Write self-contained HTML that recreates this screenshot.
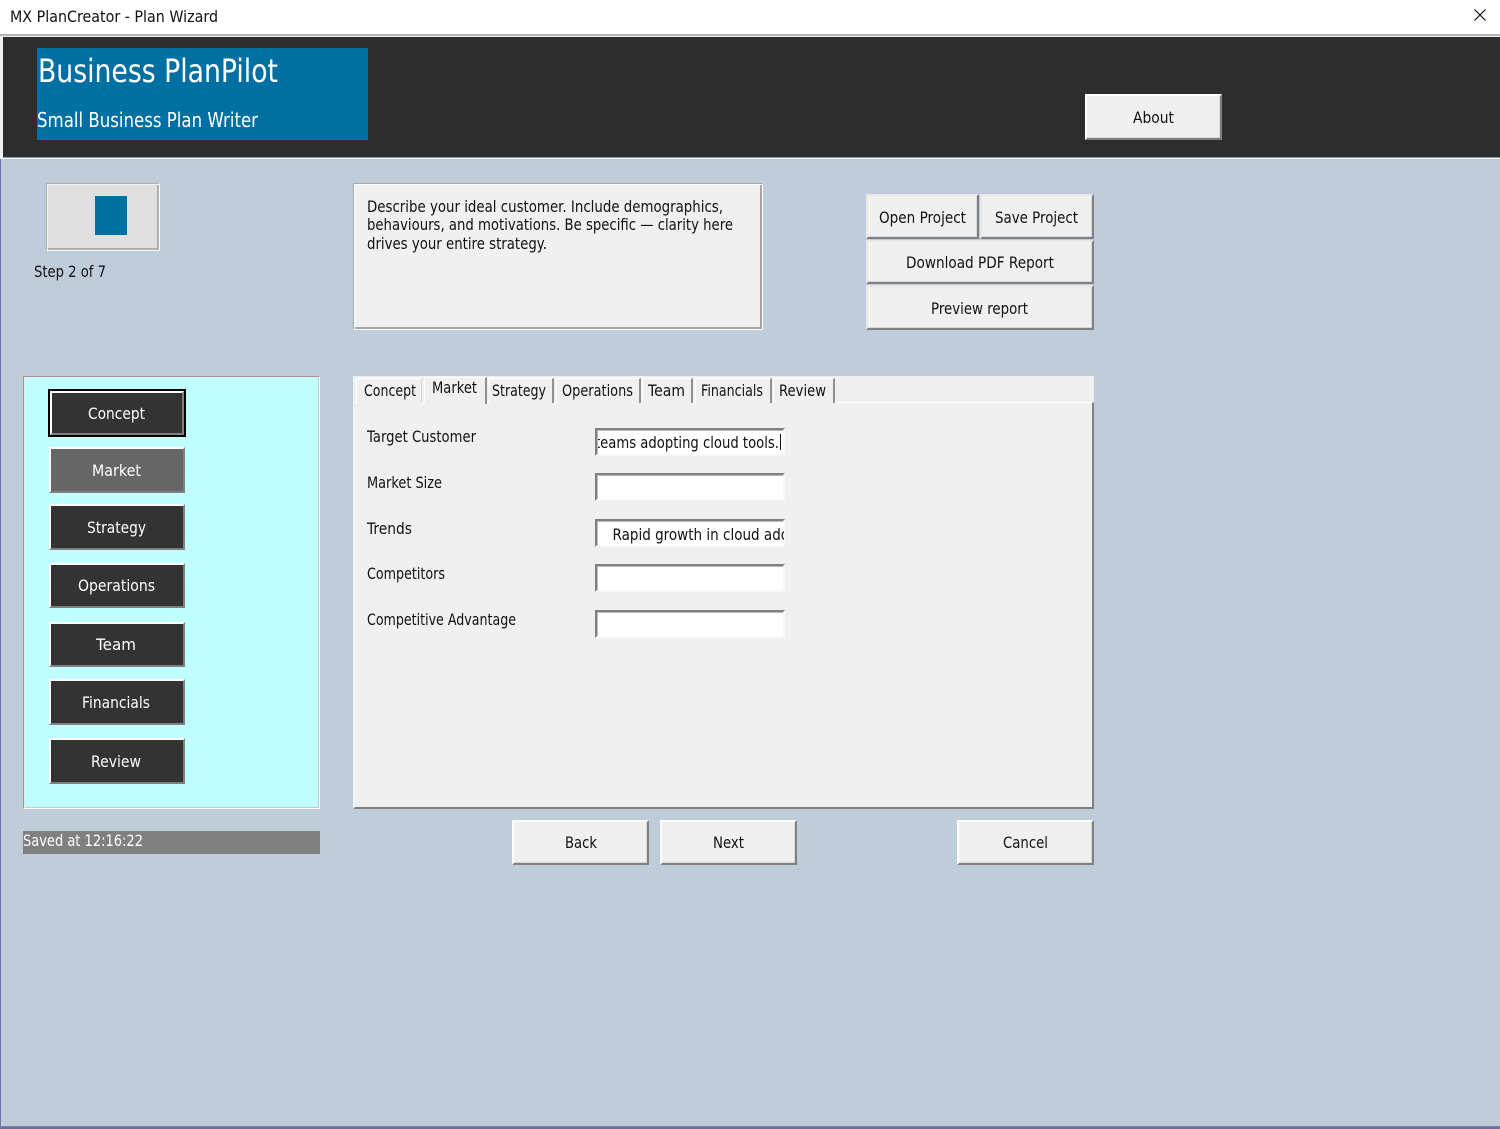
<!DOCTYPE html>
<html><head><meta charset="utf-8"><title>MX PlanCreator - Plan Wizard</title>
<style>
html,body{margin:0;padding:0;width:1500px;height:1129px;overflow:hidden;background:#bfcddb}
div{position:absolute;box-sizing:border-box}
.btn{background:#f0f0f0;border-style:solid;border-width:2px;border-color:#fff #808080 #808080 #fff;box-shadow:inset -1px -1px 0 #d8d8d8}
.btn2{background:#f0f0f0;border-style:solid;border-width:2px;border-color:#e8e8e8 #808080 #808080 #e8e8e8;box-shadow:inset -1px -1px 0 #d8d8d8}
.nav{background:#333;border-style:solid;border-width:2px;border-color:#fff #808080 #808080 #fff;left:49px;width:136px}
.inp{background:#fff;left:595px;width:190px;height:28px;border-style:solid;border-width:2px;border-color:#808080 #f8f8f8 #f8f8f8 #808080;box-shadow:inset 1px 1px 0 #bbb}
.tab{background:#f0f0f0;top:378px;height:25px;border-right:2px solid #909090;border-left:1px solid #fff;border-top:1px solid #fff}
svg{position:absolute;left:0;top:0}
text{font-family:"DejaVu Sans","Liberation Sans",sans-serif;font-size:16px;fill:#111}
.w{fill:#fff}
</style></head><body>
<div style="left:0;top:0;width:1px;height:1129px;background:#7272a8"></div>
<div style="left:0;top:0;width:1500px;height:34px;background:#fff"></div>
<div style="left:0;top:34px;width:1500px;height:2px;background:#b4b4b4"></div>
<div style="left:0;top:36px;width:1500px;height:123px;background:#f0f0f0"></div>
<div style="left:3px;top:37px;width:1497px;height:120px;background:#2d2d2d"></div>
<div style="left:3px;top:157px;width:1497px;height:1px;background:#999"></div>
<div style="left:37px;top:48px;width:331px;height:92px;background:#0070a3"></div>
<div class="btn" style="left:1085px;top:94px;width:137px;height:46px"></div>

<div style="left:46px;top:183px;width:114px;height:68px;background:#e0e0e0;border-style:solid;border-width:1px;border-color:#b0b0b0 #fff #fff #b0b0b0;box-shadow:inset 1px 1px 0 #f4f4f4,inset -2px -2px 0 #b0b0b0"></div>
<div style="left:95px;top:196px;width:32px;height:39px;background:#0070a3"></div>

<div style="left:353px;top:183px;width:410px;height:147px;background:#f0f0f0;border-style:solid;border-width:1px;border-color:#a6a6a6 #fff #fff #a6a6a6;box-shadow:inset 1px 1px 0 #fff,inset -2px -2px 0 #a6a6a6"></div>

<div class="btn2" style="left:866px;top:194px;width:113px;height:45px"></div>
<div class="btn2" style="left:980px;top:194px;width:114px;height:45px"></div>
<div class="btn2" style="left:866px;top:240px;width:228px;height:44px"></div>
<div class="btn2" style="left:866px;top:285px;width:228px;height:45px"></div>

<div style="left:23px;top:376px;width:297px;height:433px;background:#bfffff;border-style:solid;border-width:1px;border-color:#9a9a9a #fff #fff #9a9a9a;box-shadow:inset 1px 1px 0 #e8e8e8,inset -1px -1px 0 #c8c8c8"></div>
<div style="left:48px;top:389px;width:138px;height:48px;background:#000"></div>
<div class="nav" style="top:391px;height:44px;left:50px;width:134px"></div>
<div class="nav" style="top:447px;height:46px;background:#666"></div>
<div class="nav" style="top:504px;height:46px"></div>
<div class="nav" style="top:563px;height:45px"></div>
<div class="nav" style="top:622px;height:45px"></div>
<div class="nav" style="top:679px;height:46px"></div>
<div class="nav" style="top:738px;height:46px"></div>
<div style="left:23px;top:831px;width:297px;height:23px;background:#808080"></div>

<div style="left:353px;top:376px;width:741px;height:27px;background:#f0f0f0"></div>
<div style="left:353px;top:402px;width:741px;height:407px;background:#f0f0f0;border-style:solid;border-width:1px 2px 2px 2px;border-color:#fff #808080 #808080 #f4f4f4"></div>
<div style="left:355px;top:402px;width:737px;height:1px;background:#fff"></div>
<div class="tab" style="left:356px;width:66px;border-right:1px solid #d8d8d8"></div>
<div class="tab" style="left:424px;width:63px;top:377px;height:27px;border-bottom:0"></div>
<div style="left:424px;top:402px;width:61px;height:2px;background:#f0f0f0"></div>
<div class="tab" style="left:488px;width:66px"></div>
<div class="tab" style="left:556px;width:85px"></div>
<div class="tab" style="left:642px;width:51px"></div>
<div class="tab" style="left:695px;width:77px"></div>
<div class="tab" style="left:773px;width:62px"></div>

<div class="inp" style="top:428px"></div>
<div class="inp" style="top:473px"></div>
<div class="inp" style="top:519px"></div>
<div class="inp" style="top:564px"></div>
<div class="inp" style="top:610px"></div>

<div class="btn" style="left:512px;top:820px;width:137px;height:45px"></div>
<div class="btn" style="left:660px;top:820px;width:137px;height:45px"></div>
<div class="btn" style="left:957px;top:820px;width:137px;height:45px"></div>

<div style="left:0;top:1126px;width:1500px;height:1px;background:#7f8aa0"></div>
<div style="left:0;top:1127px;width:1500px;height:2px;background:#6c6ca8"></div>

<svg width="1500" height="1129" viewBox="0 0 1500 1129" xmlns="http://www.w3.org/2000/svg">
<path d="M1474.5 9.5L1485.5 20.5M1485.5 9.5L1474.500 20.5" stroke="#111" stroke-width="1.2" fill="none"/>
<text x="10" y="22" textLength="208" lengthAdjust="spacingAndGlyphs">MX PlanCreator - Plan Wizard</text>
<text class="w" x="38" y="82" textLength="240" lengthAdjust="spacingAndGlyphs" style="font-size:32px">Business PlanPilot</text>
<text class="w" x="37" y="127" textLength="221" lengthAdjust="spacingAndGlyphs" style="font-size:20px">Small Business Plan Writer</text>
<text x="1133" y="123" textLength="41" lengthAdjust="spacingAndGlyphs">About</text>
<text x="34" y="277" textLength="72" lengthAdjust="spacingAndGlyphs">Step 2 of 7</text>
<text x="367" y="212" textLength="356" lengthAdjust="spacingAndGlyphs">Describe your ideal customer. Include demographics,</text>
<text x="367" y="230" textLength="366" lengthAdjust="spacingAndGlyphs">behaviours, and motivations. Be specific — clarity here</text>
<text x="367" y="249" textLength="180" lengthAdjust="spacingAndGlyphs">drives your entire strategy.</text>
<text x="879" y="223" textLength="87" lengthAdjust="spacingAndGlyphs">Open Project</text>
<text x="995" y="223" textLength="83" lengthAdjust="spacingAndGlyphs">Save Project</text>
<text x="906" y="268" textLength="148" lengthAdjust="spacingAndGlyphs">Download PDF Report</text>
<text x="931" y="314" textLength="97" lengthAdjust="spacingAndGlyphs">Preview report</text>

<text class="w" x="88" y="419" textLength="57" lengthAdjust="spacingAndGlyphs">Concept</text>
<text class="w" x="92" y="476" textLength="49" lengthAdjust="spacingAndGlyphs">Market</text>
<text class="w" x="87" y="533" textLength="59" lengthAdjust="spacingAndGlyphs">Strategy</text>
<text class="w" x="78" y="591" textLength="77" lengthAdjust="spacingAndGlyphs">Operations</text>
<text class="w" x="96" y="650" textLength="40" lengthAdjust="spacingAndGlyphs">Team</text>
<text class="w" x="82" y="708" textLength="68" lengthAdjust="spacingAndGlyphs">Financials</text>
<text class="w" x="91" y="767" textLength="50" lengthAdjust="spacingAndGlyphs">Review</text>
<text class="w" x="23" y="846" textLength="120" lengthAdjust="spacingAndGlyphs">Saved at 12:16:22</text>

<text x="364" y="396" textLength="52" lengthAdjust="spacingAndGlyphs">Concept</text>
<text x="432" y="393" textLength="45" lengthAdjust="spacingAndGlyphs">Market</text>
<text x="492" y="396" textLength="54" lengthAdjust="spacingAndGlyphs">Strategy</text>
<text x="562" y="396" textLength="71" lengthAdjust="spacingAndGlyphs">Operations</text>
<text x="648" y="396" textLength="37" lengthAdjust="spacingAndGlyphs">Team</text>
<text x="701" y="396" textLength="62" lengthAdjust="spacingAndGlyphs">Financials</text>
<text x="779" y="396" textLength="47" lengthAdjust="spacingAndGlyphs">Review</text>

<text x="367" y="442" textLength="109" lengthAdjust="spacingAndGlyphs">Target Customer</text>
<text x="367" y="488" textLength="75" lengthAdjust="spacingAndGlyphs">Market Size</text>
<text x="367" y="534" textLength="45" lengthAdjust="spacingAndGlyphs">Trends</text>
<text x="367" y="579" textLength="78" lengthAdjust="spacingAndGlyphs">Competitors</text>
<text x="367" y="625" textLength="149" lengthAdjust="spacingAndGlyphs">Competitive Advantage</text>

<svg x="598" y="431" width="185" height="23">
<text x="-3" y="17" textLength="184" lengthAdjust="spacingAndGlyphs">teams adopting cloud tools.</text>
<path d="M182.5 3V19" stroke="#111" stroke-width="1"/>
</svg>
<svg x="598" y="522" width="186" height="23">
<text x="14.500" y="18" textLength="211" lengthAdjust="spacingAndGlyphs">Rapid growth in cloud adoption</text>
</svg>

<text x="565" y="848" textLength="32" lengthAdjust="spacingAndGlyphs">Back</text>
<text x="713" y="848" textLength="31" lengthAdjust="spacingAndGlyphs">Next</text>
<text x="1003" y="848" textLength="45" lengthAdjust="spacingAndGlyphs">Cancel</text>
</svg>
</body></html>
